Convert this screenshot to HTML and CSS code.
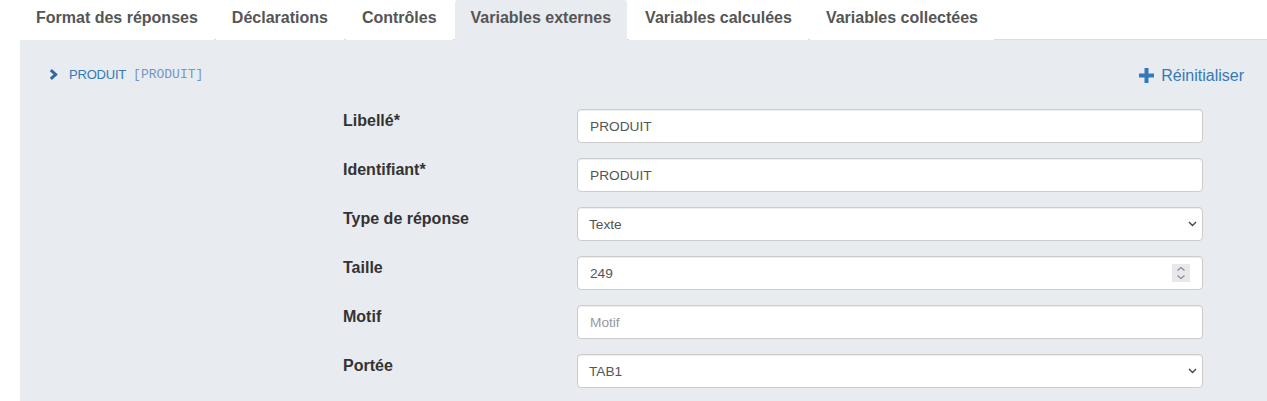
FILE: index.html
```html
<!DOCTYPE html>
<html lang="fr">
<head>
<meta charset="utf-8">
<title>Variables externes</title>
<link rel="stylesheet" href="styles.css">
</head>
<body>
<div class="page">
  <ul class="tabs">
    <li class="tab"><a>Format des réponses</a></li>
    <li class="tab"><a>Déclarations</a></li>
    <li class="tab"><a>Contrôles</a></li>
    <li class="tab active"><a>Variables externes</a></li>
    <li class="tab"><a>Variables calculées</a></li>
    <li class="tab"><a>Variables collectées</a></li>
  </ul>
  <div class="panel">
    <div class="panel-head">
      <a class="crumb">
        <svg class="chev" width="9" height="11" viewBox="0 0 9 11"><polyline points="1.8,1.2 6.6,5.5 1.8,9.8" fill="none" stroke="#2a6aa6" stroke-width="3"/></svg>
        <span class="crumb-name">PRODUIT</span>
        <span class="crumb-id">[PRODUIT]</span>
      </a>
      <a class="reset">
        <svg class="plus" width="15" height="15" viewBox="0 0 15 15"><rect x="5.5" y="0" width="4" height="15" fill="#337ab7"/><rect x="0" y="5.5" width="15" height="4" fill="#337ab7"/></svg>
        <span>Réinitialiser</span>
      </a>
    </div>
    <form class="form">
      <label class="label">Libellé*</label>
      <div class="ctrl"><input class="input" type="text" value="PRODUIT"></div>

      <label class="label">Identifiant*</label>
      <div class="ctrl"><input class="input" type="text" value="PRODUIT"></div>

      <label class="label">Type de réponse</label>
      <div class="ctrl">
        <select class="input select"><option>Texte</option></select>
        <svg class="caret" width="9" height="6" viewBox="0 0 9 6"><polyline points="1,1 4.5,4.5 8,1" fill="none" stroke="#444" stroke-width="1.4"/></svg>
      </div>

      <label class="label">Taille</label>
      <div class="ctrl">
        <input class="input" type="text" value="249">
        <span class="spin">
          <svg width="18" height="18" viewBox="0 0 18 18"><polyline points="5.5,6.5 9,3.5 12.5,6.5" fill="none" stroke="#8a8a95" stroke-width="1.2"/><polyline points="5.5,11.5 9,14.5 12.5,11.5" fill="none" stroke="#8a8a95" stroke-width="1.2"/></svg>
        </span>
      </div>

      <label class="label">Motif</label>
      <div class="ctrl"><input class="input" type="text" placeholder="Motif"></div>

      <label class="label">Portée</label>
      <div class="ctrl">
        <select class="input select"><option>TAB1</option></select>
        <svg class="caret" width="9" height="6" viewBox="0 0 9 6"><polyline points="1,1 4.5,4.5 8,1" fill="none" stroke="#444" stroke-width="1.4"/></svg>
      </div>
    </form>
  </div>
</div>
</body>
</html>
```

FILE: styles.css
```css
* { box-sizing: border-box; }
html, body {
  margin: 0;
  padding: 0;
  background: #fff;
  font-family: "Liberation Sans", Arial, sans-serif;
  color: #333;
}
.page {
  padding-left: 20px;
}
.tabs {
  list-style: none;
  margin: 0;
  padding: 0;
  display: flex;
  border-bottom: 1px solid #dcdcdc;
  height: 40px;
}
.tab {
  margin-right: 2px;
  margin-bottom: -1px;
}
.tab a {
  display: block;
  height: 40px;
  padding: 8px 16px 0 16px;
  font-size: 16px;
  font-weight: bold;
  line-height: 20px;
  color: #555;
  background: #fff;
  border-radius: 3px 3px 0 0;
}
.tab.active a {
  background: #e8ebf0;
}
.panel {
  background: #e8ebf0;
  padding: 23px 23px 14px 29px;
  min-height: 361px;
}
.panel-head {
  display: flex;
  justify-content: space-between;
  align-items: center;
  height: 22px;
}
.crumb {
  display: flex;
  align-items: center;
  color: #337ab7;
}
.chev {
  display: block;
  margin-right: 11px;
}
.crumb-name {
  font-size: 13px;
  letter-spacing: -0.2px;
}
.crumb-id {
  font-family: "Liberation Mono", "Courier New", monospace;
  font-size: 13px;
  color: #7497be;
  margin-left: 7px;
}
.reset {
  display: flex;
  align-items: center;
  color: #337ab7;
  font-size: 16px;
  margin-top: 3px;
}
.plus {
  display: block;
  margin-right: 7px;
}
.form {
  display: grid;
  grid-template-columns: 234px 626px;
  grid-auto-rows: 34px;
  row-gap: 15px;
  margin: 24px 0 0 294px;
}
.label {
  font-size: 16px;
  font-weight: bold;
  line-height: 20px;
  padding-top: 2px;
  color: #333;
}
.ctrl {
  position: relative;
}
.input {
  display: block;
  width: 100%;
  height: 34px;
  margin: 0;
  padding: 0 12px;
  font-family: "Liberation Sans", Arial, sans-serif;
  font-size: 13.7px;
  color: #555;
  background: #fff;
  border: 1px solid #ccc;
  border-radius: 4px;
  box-shadow: inset 0 1px 1px rgba(0, 0, 0, 0.075);
  outline: none;
}
.input::placeholder {
  color: #999;
}
.select {
  -webkit-appearance: none;
  appearance: none;
  padding-left: 11px;
}
.caret {
  position: absolute;
  right: 6px;
  top: 14px;
  pointer-events: none;
}
.spin {
  position: absolute;
  right: 13px;
  top: 8px;
  width: 18px;
  height: 18px;
  background: #e7e7ec;
}
.spin svg {
  display: block;
}
```
